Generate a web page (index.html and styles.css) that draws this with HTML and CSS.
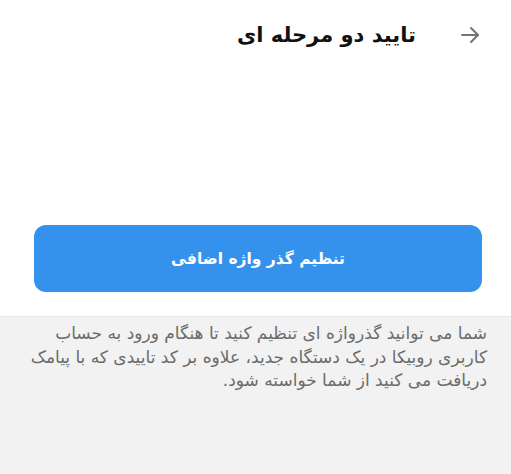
FILE: index.html
```html
<!DOCTYPE html>
<html lang="fa" dir="rtl">
<head>
    <meta charset="UTF-8">
    <meta name="viewport" content="width=device-width, initial-scale=1.0">
    <title>تایید دو مرحله ای</title>
    <link rel="stylesheet" href="styles.css">
</head>
<body>
    <div class="page">
        <header class="top-bar">
            <button class="back-btn" aria-label="بازگشت">
                <svg width="24" height="24" viewBox="0 0 24 24" fill="none" stroke="#757575" stroke-width="2" stroke-linecap="round" stroke-linejoin="round">
                    <path d="M4 12h16"/>
                    <path d="M13 5l7 7-7 7"/>
                </svg>
            </button>
            <h1>تایید دو مرحله ای</h1>
        </header>

        <section class="action">
            <button class="btn">تنظیم گذر واژه اضافی</button>
        </section>

        <section class="info">
            <p>شما می توانید گذرواژه ای تنظیم کنید تا هنگام ورود به حساب<br>کاربری روبیکا در یک دستگاه جدید، علاوه بر کد تاییدی که با پیامک<br>دریافت می کنید از شما خواسته شود.</p>
        </section>
    </div>
</body>
</html>
```

FILE: styles.css
```css
body {
    font-family: 'DejaVu Sans', sans-serif;
    margin: 0;
    padding: 0;
    background-color: white;
    color: #222;
}

.page {
    display: flex;
    flex-direction: column;
    min-height: 474px;
}

.top-bar {
    display: flex;
    align-items: center;
    height: 70px;
    padding: 0 29px 0 20px;
    gap: 42px;
}

.back-btn {
    background: none;
    border: none;
    padding: 0;
    display: flex;
    cursor: pointer;
}

.top-bar h1 {
    margin: 0;
    font-size: 21px;
    font-weight: bold;
    color: #111;
}

.action {
    padding: 155px 29px 24px 34px;
}

.btn {
    display: block;
    width: 100%;
    height: 67px;
    background-color: #3592ec;
    color: #fff;
    font-family: inherit;
    font-size: 15.5px;
    font-weight: bold;
    border: none;
    border-radius: 12px;
    cursor: pointer;
}

.info {
    flex: 1;
    background: #f2f2f2;
    border-top: 1px solid #e6e6e6;
    padding: 5px 24px 0 20px;
}

.info p {
    margin: 0;
    font-size: 17px;
    line-height: 23.5px;
    color: #6b6b6b;
    white-space: nowrap;
}
```
